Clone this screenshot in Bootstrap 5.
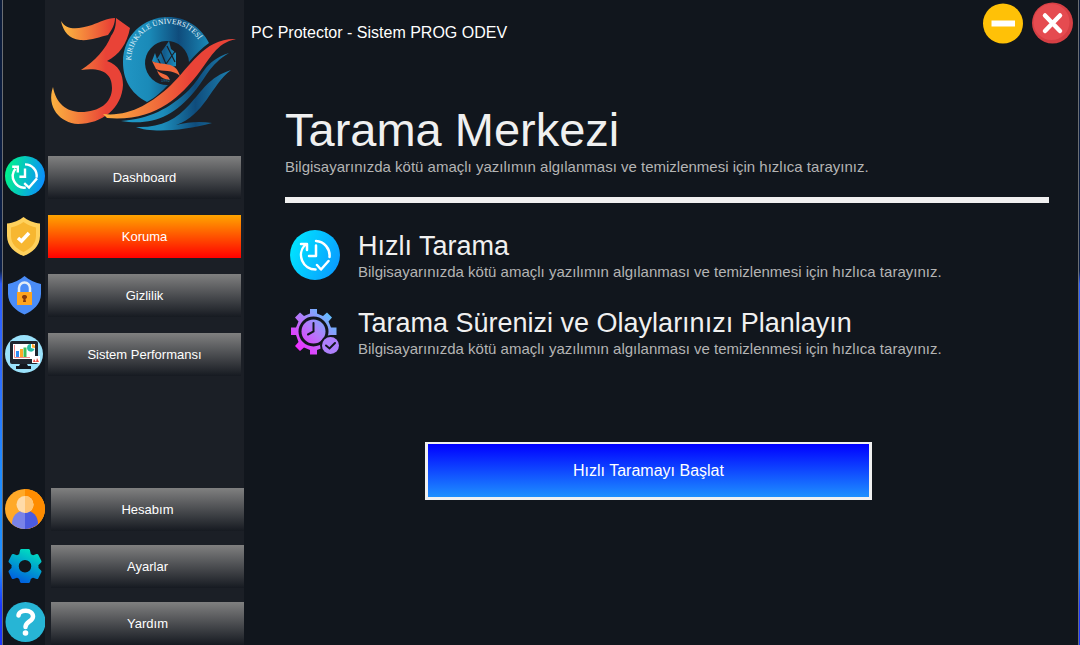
<!DOCTYPE html>
<html lang="tr">
<head>
<meta charset="utf-8">
<meta name="viewport" content="width=device-width, initial-scale=1">
<title>PC Protector</title>
<link href="https://cdn.jsdelivr.net/npm/bootstrap@5.3.0/dist/css/bootstrap.min.css" rel="stylesheet">
<style>
  body {
    font-family: "Liberation Sans", Arial, sans-serif;
    color: #f0f0f0;
    background: linear-gradient(#0c1c3a 0, #0b1f48 42%, #2a5cff 44%, #2f6bff 57%, #1e8cff 73%, #1f8fff 88%, #1a36ff 94%, #1a36ff 100%);
  }
  .app-window {
    margin-left: 2px;
    margin-right: 1px;
    background: #11161d;
    border: solid #6b6e73;
    border-width: 0 1px;
  }
  .side {
    width: 241px;
    background: linear-gradient(to right, #11161d 42px, #1b1f26 42px);
  }
  .logo-box { margin-left: 42px; height: 156px; }
  .side-top { gap: 16px; padding-right: 3px; }
  .side-bottom { gap: 14px; }
  .side-icon { width: 42px; height: 42px; padding-left: 2px; }
  .side-top .side-icon { margin-right: 3px; }
  .side-bottom .side-icon { margin-right: 6px; }
  .side-btn {
    height: 43px;
    border: 0;
    color: #fff;
    font-size: 13px;
    background: linear-gradient(#808080, #161a21);
  }
  .side-btn.current { background: linear-gradient(#ffa500, #ff0000); }
  .title-text { font-size: 16px; line-height: 20px; padding: 23px 0 0 7px; color: #fff; }
  .win-btns { gap: 8px; padding: 2px 5px 0 0; }
  .content { padding: 59px 29px 0 41px; }
  .big-title { font-size: 47px; line-height: 54px; }
  .sub { font-size: 15px; line-height: 20px; color: #b4b4b4; }
  .rule { height: 6px; background: #f0f0f0; opacity: 1; border: 0; margin: 20px 0 27px; }
  .option { gap: 18px; padding-left: 5px; }
  .options { gap: 25px; }
  .option-title { font-size: 27px; line-height: 32px; }
  .start-wrap { padding-top: 83px; }
  .start-btn {
    width: 447px;
    height: 58px;
    margin-left: 140px;
    color: #fff;
    font-size: 16px;
    border: solid #f0f0f0;
    border-width: 2px 3px 3px;
    background: linear-gradient(#0000ff, #1e90ff);
  }
</style>
</head>
<body>
<div class="app-window d-flex min-vh-100">
  <aside class="side d-flex flex-column flex-shrink-0">
    <div class="logo-box">
      <svg width="199" height="145" viewBox="45 0 199 145" role="img" aria-label="Kırıkkale Üniversitesi">
        <defs>
          <linearGradient id="warmTop" gradientUnits="userSpaceOnUse" x1="66" y1="0" x2="116" y2="0"><stop offset="0" stop-color="#fbb040"/><stop offset=".9" stop-color="#e94335"/></linearGradient>
          <linearGradient id="warmBody" gradientUnits="userSpaceOnUse" x1="52" y1="0" x2="112" y2="0"><stop offset="0" stop-color="#fbb040"/><stop offset=".35" stop-color="#f58a3c"/><stop offset=".9" stop-color="#e94337"/></linearGradient>
          <linearGradient id="warmWave" gradientUnits="userSpaceOnUse" x1="103" y1="0" x2="205" y2="0"><stop offset="0" stop-color="#fbb040"/><stop offset=".85" stop-color="#e94337"/></linearGradient>
          <linearGradient id="ringBlue" gradientUnits="userSpaceOnUse" x1="123" y1="0" x2="210" y2="0"><stop offset="0" stop-color="#2196c4"/><stop offset=".3" stop-color="#1a8ab8"/><stop offset=".64" stop-color="#0f4c7c"/><stop offset="1" stop-color="#1a8ab8"/></linearGradient>
          <linearGradient id="waveBlue" gradientUnits="userSpaceOnUse" x1="122" y1="0" x2="230" y2="0"><stop offset="0" stop-color="#1f9ac8"/><stop offset=".38" stop-color="#1c8cba"/><stop offset=".68" stop-color="#0f4c7c"/><stop offset="1" stop-color="#1c7eae"/></linearGradient>
          <linearGradient id="flameBlue" x1="0" y1="0" x2="1" y2="0"><stop offset="0" stop-color="#1f93c4"/><stop offset=".5" stop-color="#12598a"/><stop offset="1" stop-color="#1d8dbd"/></linearGradient>
          <path id="arcText" d="M131 60.500A37 37 0 0 1 205 61"/>
        </defs>
        <path fill="url(#warmTop)" d="M61 21C67 31 79 29 92 25 100 22 107 18 115 18 115 24 112 30 108 35 99 37 90 41 80 40 69 39 63 31 61 21Z"/>
        <path fill="url(#warmBody)" d="M116 18 130 28C127 44 119 55 107 61 119 65 123 74 123 85 122 108 102 124 78 124 60 123 46 107 53 87 56 103 66 112 81 112 99 112 112 103 112 88 112 74 103 67 81 70 95 61 106 49 111 36 115 31 116 25 116 18Z"/>
        <path fill="url(#ringBlue)" d="M147 102C130 93 123 79 123 62 123 36 143 17 168 17 186 17 201 27 209 43 202 48 195 55 189 62A22 22 0 1 0 168 85C162 91 155 98 147 102Z"/>
        <text font-family="Liberation Serif, serif" font-size="7.500" fill="#e6f6fc"><textPath href="#arcText">KIRIKKALE ÜNİVERSİTESİ</textPath></text>
        <path fill="url(#flameBlue)" d="M152 61 155 53 157 59 162 51 169 41 171 49 176 53 176 66 168 68 154 62Z"/>
        <path fill="none" stroke="#1b1f26" stroke-width="1.200" d="M161 52 166 64M167 46 175 62M176 50 166 64M158 59 161 65"/>
        <path fill="#f2693c" d="M152 61C160 66 176 60 180 76 173 69 162 72 156 69ZM157 70C160 75 167 72 170 80 163 79 159 77 157 70Z"/>
        <text x="161" y="82" font-family="Liberation Sans, sans-serif" font-size="4" fill="#1b7fb0">1992</text>
        <path fill="url(#warmWave)" d="M103 114C128 117 151 104 171 85 190 67 204 38 236 39 216 43 210 59 198 74 180 97 155 122 107 118Z"/>
        <path fill="url(#waveBlue)" d="M229 53C204 61 203 76 189 90 169 109 149 119 121 121 151 126 173 117 194 92 206 78 209 65 229 53Z"/>
        <path fill="url(#waveBlue)" d="M231 70C209 77 202 91 190 104 176 120 160 128 136 127 151 133 183 131 212 123 200 121 188 122 176 125 205 115 211 85 231 70Z"/>
      </svg>
    </div>

    <nav class="side-top d-flex flex-column" aria-label="Ana menü">
      <div class="d-flex">
        <span class="side-icon d-flex align-items-start justify-content-center flex-shrink-0">
          <svg width="40" height="40" viewBox="0 0 50 50" aria-hidden="true">
            <defs><linearGradient id="gGreen" x1="0" y1=".4" x2="1" y2=".6"><stop offset="0" stop-color="#00f58a"/><stop offset="1" stop-color="#0c8cff"/></linearGradient></defs>
            <circle cx="25" cy="25" r="25" fill="url(#gGreen)"/>
            <g fill="none" stroke="#fff" stroke-width="3">
              <path d="M25 10.500A14.500 14.500 0 0 1 39.500 27M13 16A14.500 14.500 0 0 0 26 39.500M9 13.500H16V20.500M25 15.500V26H18M24 34 30 39.500 40 28"/>
            </g>
          </svg>
        </span>
        <button type="button" class="side-btn flex-grow-1">Dashboard</button>
      </div>
      <div class="d-flex">
        <span class="side-icon d-flex align-items-center justify-content-center flex-shrink-0">
          <svg width="40" height="40" viewBox="0 0 40 40" aria-hidden="true">
            <path fill="#ffd15c" d="M18.500 1C22 4 29 7 35 7.500V20C35 30 27 37 18.500 40 10 37 2 30 2 20V7.500C8 7 15 4 18.500 1Z"/>
            <path fill="#f7b731" d="M18.500 6C22 8.500 26 10.500 31 11.500V20C31 28 25 33 18.500 36 12 33 6 28 6 20V11.500C11 10.500 15 8.500 18.500 6Z"/>
            <path fill="none" stroke="#fff" stroke-width="3.500" d="M13 22 16.500 25 24 17"/>
          </svg>
        </span>
        <button type="button" class="side-btn current flex-grow-1" aria-current="page">Koruma</button>
      </div>
      <div class="d-flex">
        <span class="side-icon d-flex align-items-center justify-content-center flex-shrink-0">
          <svg width="40" height="40" viewBox="0 0 40 40" aria-hidden="true">
            <path fill="#4a8cf7" d="M19.500 1C24 5 30 7.500 36 9V19C36 29 28 36 19.500 39.500 11 36 3 29 3 19V9C9 7.500 15 5 19.500 1Z"/>
            <path fill="none" stroke="#e3ecf5" stroke-width="2.500" d="M14 18V13A5.500 5.500 0 0 1 25 13V18"/>
            <path fill="#ffa51f" d="M12 17H27V30H12Z"/>
            <path fill="#8a3b0c" d="M19.500 20A2 2 0 0 1 20.500 24L21 27H18L18.500 24A2 2 0 0 1 19.500 20Z"/>
          </svg>
        </span>
        <button type="button" class="side-btn flex-grow-1">Gizlilik</button>
      </div>
      <div class="d-flex">
        <span class="side-icon d-flex align-items-center justify-content-center flex-shrink-0">
          <svg width="40" height="40" viewBox="0 0 40 40" aria-hidden="true">
            <circle cx="19" cy="20" r="19" fill="#9be2fb"/>
            <rect x="5" y="7" width="28" height="23" rx="2" fill="#20252e"/>
            <path fill="#fff" d="M8 10H30V25H8Z"/>
            <path fill="#14181f" d="M15 30H22L23 32H26V35H11V32H14Z"/>
            <path fill="none" stroke="#f28a8a" d="M9.500 11V23.500H25"/>
            <path fill="#2f8df5" d="M11 17H14V23H11Z"/><path fill="#ffa928" d="M15 15H18V23H15Z"/><path fill="#3fbf5a" d="M18.500 13.500H21.500V23H18.500Z"/>
            <path fill="#26bda5" d="M26 10A3.800 3.800 0 1 0 29.500 15L26 14Z"/><path fill="#ffa928" d="M27 10A3.500 3.500 0 0 1 30 14L27 13.500Z"/>
            <path fill="#fff" d="M27 22H35V29H27Z"/><path fill="#e8483f" d="M28 28 29 25 31 28 32 24 34 28Z"/>
          </svg>
        </span>
        <button type="button" class="side-btn flex-grow-1">Sistem Performansı</button>
      </div>
    </nav>

    <nav class="side-bottom d-flex flex-column mt-auto" aria-label="Hesap menüsü">
      <div class="d-flex">
        <span class="side-icon d-flex align-items-center justify-content-center flex-shrink-0">
          <svg width="40" height="40" viewBox="0 0 40 40" aria-hidden="true">
            <circle cx="20" cy="20" r="20" fill="#ffa928"/><path fill="#ff8c00" d="M20 0A20 20 0 0 1 20 40Z"/>
            <path fill="#7983e8" d="M20 21.500C12 21.500 7 27 7 35A20 20 0 0 0 20 40Z"/>
            <path fill="#4b5be0" d="M20 21.500C28 21.500 33 27 33 35A20 20 0 0 1 20 40Z"/>
            <circle cx="20" cy="15.500" r="8.500" fill="#ffdba9"/><path fill="#ffc473" d="M20 7A8.500 8.500 0 0 1 20 24Z"/>
          </svg>
        </span>
        <button type="button" class="side-btn flex-grow-1">Hesabım</button>
      </div>
      <div class="d-flex">
        <span class="side-icon d-flex align-items-center justify-content-center flex-shrink-0">
          <svg width="40" height="40" viewBox="0 0 40 40" aria-hidden="true">
            <defs><linearGradient id="gGear" x1=".3" y1="1" x2=".7" y2="0"><stop offset="0" stop-color="#0060e0"/><stop offset="1" stop-color="#00dcc0"/></linearGradient></defs>
            <path fill="url(#gGear)" fill-rule="evenodd" stroke="url(#gGear)" stroke-width="3" stroke-linejoin="round" d="M16.500 4.500H23.500L24.500 9 28 11 32 9.500 35 15.500 32 18.500V22.500L35 25.500 32 31.500 28 30 24.500 32 23.500 35.500H16.500L15.500 32 12 30 8 31.500 5 25.500 8 22.500V18.500L5 15.500 8 9.500 12 11 15.500 9ZM20 12.500A7.700 7.700 0 1 0 20 28 7.700 7.700 0 1 0 20 12.500Z"/>
          </svg>
        </span>
        <button type="button" class="side-btn flex-grow-1">Ayarlar</button>
      </div>
      <div class="d-flex">
        <span class="side-icon d-flex align-items-start justify-content-center flex-shrink-0">
          <svg width="40" height="40" viewBox="0 0 40 40" aria-hidden="true">
            <circle cx="20.500" cy="20" r="20" fill="#27b5d5"/>
            <path fill="none" stroke="#fff" stroke-width="4.500" stroke-linecap="round" d="M13.500 13.500C14 7 28 7 28 14.500 28 19.500 20.500 19.500 20.500 25"/>
            <circle cx="20.500" cy="31" r="2.800" fill="#fff"/>
          </svg>
        </span>
        <button type="button" class="side-btn flex-grow-1">Yardım</button>
      </div>
    </nav>
  </aside>

  <main class="flex-grow-1">
    <header class="d-flex justify-content-between align-items-start">
      <div class="title-text">PC Protector - Sistem PROG ODEV</div>
      <div class="win-btns d-flex align-items-center">
        <button type="button" class="btn p-0 border-0 d-flex" aria-label="Simge durumuna küçült">
          <svg width="41" height="41" viewBox="0 0 41 41" aria-hidden="true"><circle cx="20" cy="20.500" r="20" fill="#ffc107"/><path fill="#fff" d="M8.500 17.500H32V23.500H8.500Z"/></svg>
        </button>
        <button type="button" class="btn p-0 border-0 d-flex" aria-label="Kapat">
          <svg width="41" height="42" viewBox="0 0 41 42" aria-hidden="true"><circle cx="20.500" cy="21" r="20.500" fill="#d63f44"/><circle cx="19.500" cy="20" r="18" fill="#e54b50"/><path fill="none" stroke="#fff" stroke-width="4.500" stroke-linecap="round" d="M13 13.500 28 29M28 13.500 13 29"/></svg>
        </button>
      </div>
    </header>

    <div class="content">
      <h1 class="big-title fw-normal mb-0">Tarama Merkezi</h1>
      <p class="sub mb-0">Bilgisayarınızda kötü amaçlı yazılımın algılanması ve temizlenmesi için hızlıca tarayınız.</p>
      <hr class="rule">
      <div class="options d-flex flex-column">
        <section class="option d-flex align-items-start">
          <svg class="flex-shrink-0" width="50" height="50" viewBox="0 0 50 50" aria-hidden="true">
            <defs><linearGradient id="gCyan" x1="0" y1=".3" x2="1" y2=".7"><stop offset="0" stop-color="#00e5ff"/><stop offset="1" stop-color="#0a9bff"/></linearGradient></defs>
            <circle cx="25" cy="25" r="25" fill="url(#gCyan)"/>
            <g fill="none" stroke="#fff" stroke-width="2.500" stroke-linecap="round" stroke-linejoin="round">
              <path d="M26 11A14.500 14.500 0 0 1 39.500 27M15 15A14.500 14.500 0 0 0 25.500 39.500M11 14H17V20M26 15.500V26H19M27 35 31 39.500 38.500 31"/>
            </g>
          </svg>
          <div>
            <h2 class="option-title fw-normal mb-0">Hızlı Tarama</h2>
            <p class="sub mb-0">Bilgisayarınızda kötü amaçlı yazılımın algılanması ve temizlenmesi için hızlıca tarayınız.</p>
          </div>
        </section>
        <section class="option d-flex align-items-start">
          <svg class="flex-shrink-0" width="50" height="50" viewBox="0 0 50 50" aria-hidden="true">
            <defs><linearGradient id="gPink" gradientUnits="userSpaceOnUse" x1="8" y1="42" x2="42" y2="8"><stop offset="0" stop-color="#f02cff"/><stop offset=".5" stop-color="#b37bfa"/><stop offset="1" stop-color="#5cc3ff"/></linearGradient></defs>
            <g fill="url(#gPink)">
              <path fill-rule="evenodd" d="M20 2H27V6.500L33 9 37 5.500 42 10.500 38.500 14.500 41 20.500H46.500V28H41L40 31 33 31 32 41 27 43V47.500H20V43L14 40.500 10 44 5 39 8.500 35 6 28H1V20.500H6L8.500 14.500 5 10.500 10 5.500 14 9 20 6.500ZM23.500 9.500A15 15 0 1 0 23.500 39.500 15 15 0 1 0 23.500 9.500Z"/>
              <circle cx="23.500" cy="24.500" r="12"/>
            </g>
            <circle cx="40.500" cy="38.500" r="10.500" fill="#11161d"/><circle cx="40.500" cy="38.500" r="8.500" fill="#ae80fb"/>
            <g fill="none" stroke="#11161d" stroke-width="2" stroke-linecap="round">
              <path d="M23.500 16V24.500L18 27.500M36 38.500 39.500 41.500 45 36"/>
            </g>
          </svg>
          <div>
            <h2 class="option-title fw-normal mb-0">Tarama Sürenizi ve Olaylarınızı Planlayın</h2>
            <p class="sub mb-0">Bilgisayarınızda kötü amaçlı yazılımın algılanması ve temizlenmesi için hızlıca tarayınız.</p>
          </div>
        </section>
      </div>
      <div class="start-wrap">
        <button type="button" class="start-btn">Hızlı Taramayı Başlat</button>
      </div>
    </div>
  </main>
</div>
<script src="https://cdn.jsdelivr.net/npm/bootstrap@5.3.0/dist/js/bootstrap.bundle.min.js"></script>
</body>
</html>
